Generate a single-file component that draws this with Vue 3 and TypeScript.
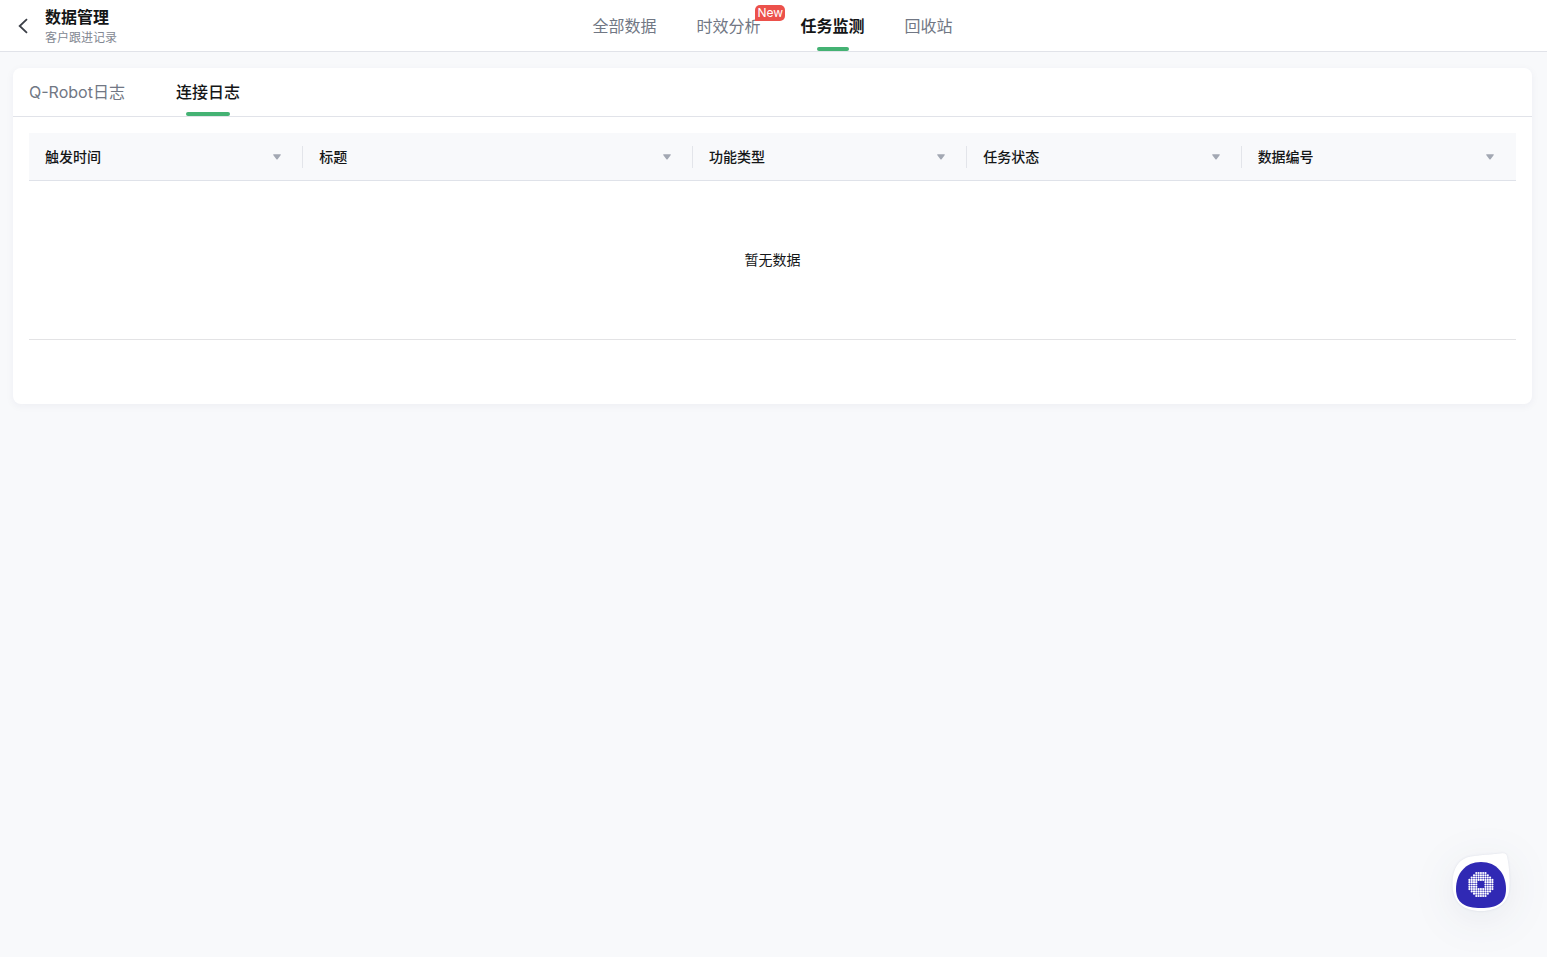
<script setup lang="ts">
import { ref } from 'vue'

interface NavItem {
  label: string
  badge?: string
}

const navItems: NavItem[] = [
  { label: '全部数据' },
  { label: '时效分析', badge: 'New' },
  { label: '任务监测' },
  { label: '回收站' },
]
const activeNav = ref('任务监测')

const logTabs: string[] = ['Q-Robot日志', '连接日志']
const activeTab = ref('连接日志')

const columns: string[] = ['触发时间', '标题', '功能类型', '任务状态', '数据编号']

// Dots of the assistant logo: a disc of round dots with a hollow centre.
const dots: { x: number; y: number }[] = []
for (let row = -5; row <= 5; row++) {
  for (let col = -5; col <= 5; col++) {
    const d = Math.hypot(row, col)
    if (d <= 5.6 && d >= 1.5) dots.push({ x: col * 2.3, y: row * 2.3 })
  }
}
</script>

<template>
  <div class="page">
    <header class="topbar">
      <div class="heading">
        <button class="back" type="button" aria-label="返回">
          <svg width="12" height="16" viewBox="0 0 12 16" fill="none">
            <path d="M10 1.200 L2.700 8 L10 14.800" stroke="#3b3f47" stroke-width="1.800" />
          </svg>
        </button>
        <div>
          <h1 class="title">数据管理</h1>
          <p class="subtitle">客户跟进记录</p>
        </div>
      </div>
      <nav class="nav">
        <a
          v-for="item in navItems"
          :key="item.label"
          href="#"
          class="nav-link"
          :class="{ active: item.label === activeNav }"
          @click.prevent="activeNav = item.label"
        >
          {{ item.label }}
          <span v-if="item.badge" class="badge">{{ item.badge }}</span>
        </a>
      </nav>
      <div></div>
    </header>

    <main class="card">
      <div class="tabs" role="tablist">
        <button
          v-for="tab in logTabs"
          :key="tab"
          type="button"
          role="tab"
          class="tab"
          :class="{ active: tab === activeTab }"
          :aria-selected="tab === activeTab"
          @click="activeTab = tab"
        >
          {{ tab }}
        </button>
      </div>
      <div class="table-wrap">
        <table class="table">
          <thead>
            <tr>
              <th v-for="(name, i) in columns" :key="name" :class="{ wide: i === 1 }" scope="col">
                <div class="cell">
                  <span>{{ name }}</span>
                  <button class="filter" type="button" :aria-label="name">
                    <svg width="8" height="6" viewBox="0 0 8 6">
                      <path d="M0.600 0.300 H7.400 Q8.200 0.500 7.600 1.200 L4.600 5.200 Q4 5.800 3.400 5.200 L0.400 1.200 Q-0.200 0.500 0.600 0.300 Z" fill="#a3a8b3" />
                    </svg>
                  </button>
                </div>
              </th>
            </tr>
          </thead>
          <tbody>
            <tr>
              <td class="empty" :colspan="columns.length">暂无数据</td>
            </tr>
          </tbody>
        </table>
      </div>
    </main>

    <button class="assistant" type="button" aria-label="智能助手">
      <svg width="58" height="58" viewBox="0 0 58 58">
        <path
          d="M19 3.500 C29 2 41 1.500 50 0.300 C53.500 0 54.500 1 55.200 4 C57 13 58 24 57.500 34 C57 49 47 58 29 58 C11 58 0.500 49 0.500 31 C0.500 15 7 5.500 19 3.500 Z"
          fill="#fff"
        />
        <path
          d="M29 9 C45 9 54 21 54 36 C54 50 45 55 29 55 C13 55 4 50 4 36 C4 21 13 9 29 9 Z"
          fill="#3029b4"
        />
        <g transform="translate(28.900 31.500)" fill="#fff">
          <circle v-for="(dot, i) in dots" :key="i" :cx="dot.x" :cy="dot.y" r="1.100" />
        </g>
      </svg>
    </button>
  </div>
</template>

<style>
body {
  background: #f8f9fb;
}
</style>

<style scoped>
.page {
  min-height: 100vh;
  background: #f8f9fb;
  color: #141617;
  font-family: Inter, "Noto Sans CJK SC", sans-serif;
  font-size: 14px;
}

button {
  padding: 0;
  border: 0;
  background: none;
  font-family: inherit;
  color: inherit;
  cursor: pointer;
}

svg {
  display: block;
}

.topbar {
  display: grid;
  grid-template-columns: 1fr auto 1fr;
  height: 51px;
  padding-right: 2px;
  background: #fff;
  border-bottom: 1px solid #e1e3e9;
}

.heading {
  display: flex;
  align-items: center;
  gap: 16px;
  padding-left: 17px;
}

.title,
.subtitle {
  margin: 0;
}

.title {
  margin-bottom: 2px;
  font-size: 16px;
  line-height: 22px;
  font-weight: 600;
}

.subtitle {
  font-size: 12px;
  line-height: 16px;
  color: #838892;
}

.nav {
  display: flex;
  gap: 40px;
}

.nav-link {
  position: relative;
  height: 51px;
  font-size: 16px;
  line-height: 52px;
  color: #717784;
  text-decoration: none;
}

.nav-link.active {
  color: #141617;
  font-weight: 600;
}

.tab.active {
  color: #141617;
  font-weight: 500;
}

.nav-link.active::after,
.tab.active::after {
  content: "";
  position: absolute;
  bottom: 0;
  left: 50%;
  width: 32px;
  height: 4px;
  margin-left: -16px;
  border-radius: 2px;
  background: #44b273;
}

.badge {
  position: absolute;
  top: 5px;
  left: 59px;
  height: 16px;
  padding: 0 2px;
  border-radius: 5px 5px 5px 0;
  background: #ec514b;
  color: #fff;
  font-size: 12px;
  line-height: 16px;
}

.card {
  margin: 16px 15px 0 13px;
  padding-bottom: 64px;
  border-radius: 8px;
  background: #fff;
  box-shadow: 0 2px 8px rgba(30, 40, 90, 0.05);
}

.tabs {
  display: flex;
  gap: 51px;
  padding: 0 16px;
  border-bottom: 1px solid #e1e3e9;
}

.tab {
  position: relative;
  height: 48px;
  font-size: 16px;
  line-height: 48px;
  color: #717784;
}

.tab.active::after {
  width: 44px;
  margin-left: -22px;
}

.table-wrap {
  padding: 16px 16px 0;
}

.table {
  width: 100%;
  table-layout: fixed;
  border-collapse: separate;
  border-spacing: 0;
}

th {
  padding: 0;
  background: #f8f9fb;
  border-bottom: 1px solid #dfe2e9;
  font-weight: 500;
  text-align: left;
}

th.wide {
  width: 26.2%;
}

.cell {
  display: flex;
  align-items: center;
  justify-content: space-between;
  height: 22px;
  margin: 13px 0 12px;
  padding: 0 21px 0 16px;
  border-right: 1px solid #e3e5ea;
  line-height: 22px;
}

th:last-child .cell {
  border-right-color: transparent;
}

.empty {
  height: 156px;
  padding: 0 0 2px;
  border-bottom: 1px solid #e3e3e5;
  text-align: center;
}

.assistant {
  position: fixed;
  right: 37px;
  bottom: 46px;
  filter: drop-shadow(0 0 1px rgba(60, 70, 120, 0.12)) drop-shadow(0 8px 20px rgba(40, 50, 90, 0.08));
}
</style>
